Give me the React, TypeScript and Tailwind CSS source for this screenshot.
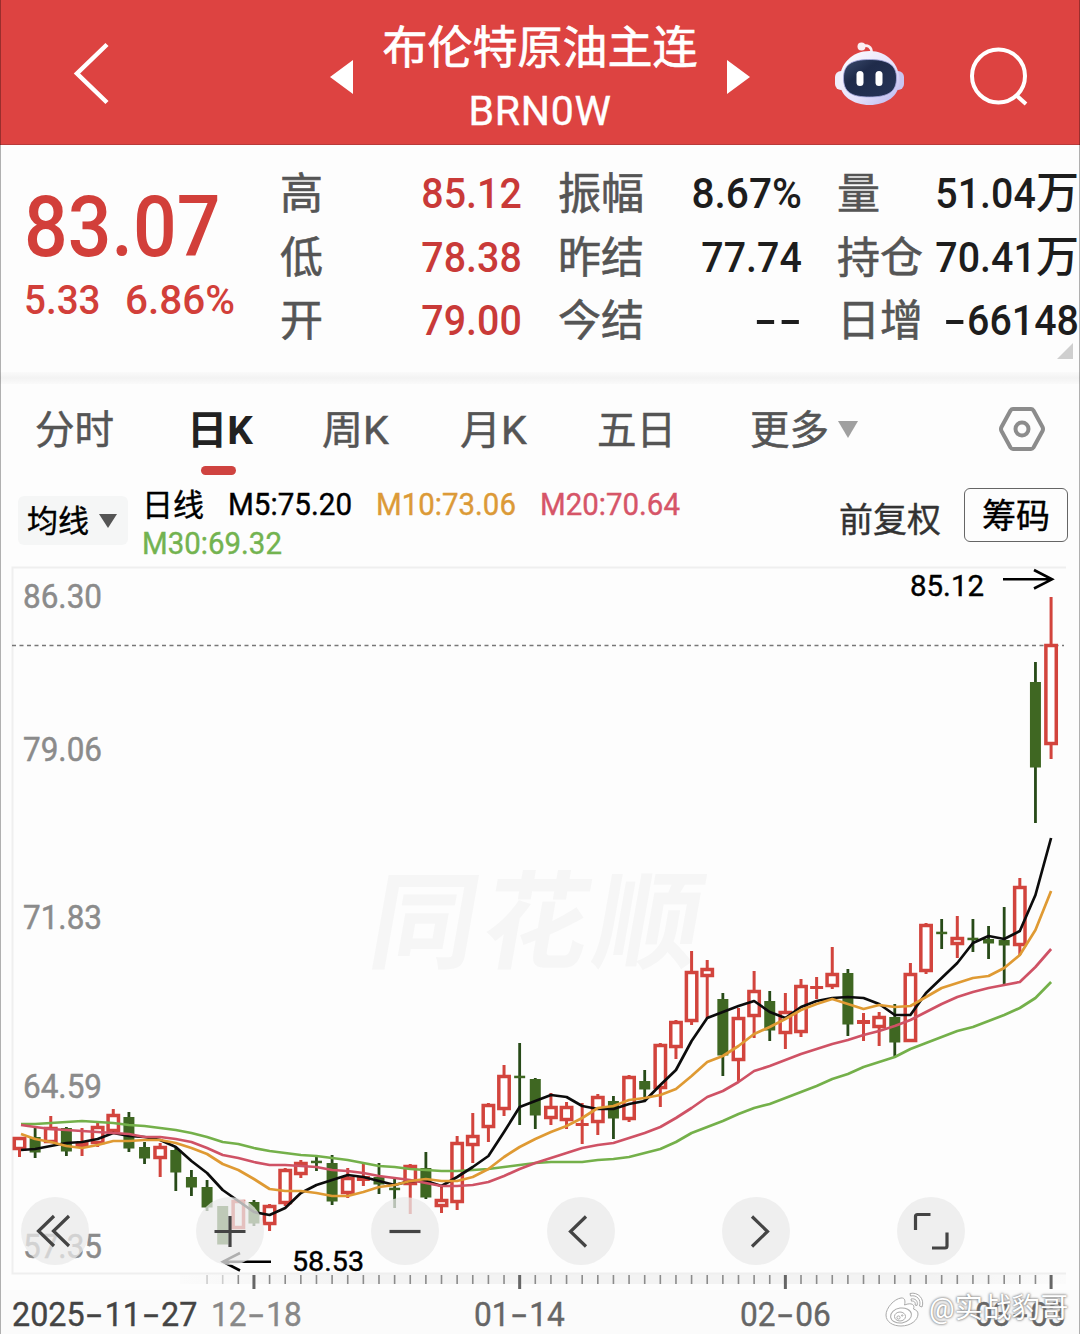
import { Fragment } from "react";

const STEP = 15.63;
const FIRST_X = 19.5;

// [wick top, body top, body bottom, wick bottom, is up]
const candles = [
  [1137, 1137, 1150, 1157, 1], [1128, 1137, 1152, 1158, 0], [1116, 1127, 1143, 1143, 1], [1127, 1128, 1151, 1156, 0],
  [1128, 1142, 1147, 1156, 1], [1122, 1126, 1144, 1147, 1], [1109, 1114, 1132, 1133, 1], [1112, 1117, 1148, 1152, 0],
  [1142, 1147, 1158, 1164, 0], [1143, 1146, 1159, 1177, 1], [1148, 1150, 1172, 1191, 0], [1170, 1177, 1187, 1196, 0],
  [1180, 1187, 1207, 1211, 0], [1206, 1206, 1244, 1244, 0], [1200, 1200, 1229, 1229, 1], [1200, 1202, 1223, 1226, 0],
  [1204, 1205, 1225, 1231, 1], [1168, 1169, 1204, 1206, 1], [1160, 1162, 1175, 1178, 1], [1157, 1161, 1163, 1171, 0],
  [1155, 1163, 1201, 1205, 0], [1168, 1177, 1194, 1198, 1], [1164, 1176, 1181, 1186, 1], [1163, 1177, 1184, 1194, 0],
  [1179, 1188, 1190, 1208, 0], [1164, 1165, 1185, 1214, 1], [1152, 1168, 1197, 1199, 0], [1187, 1199, 1207, 1213, 1],
  [1136, 1142, 1203, 1210, 1], [1113, 1135, 1146, 1163, 1], [1103, 1104, 1128, 1142, 1], [1065, 1075, 1110, 1116, 1],
  [1043, 1076, 1078, 1125, 0], [1078, 1079, 1115, 1129, 0], [1093, 1106, 1119, 1125, 1], [1102, 1106, 1121, 1129, 1],
  [1103, 1123, 1126, 1144, 1], [1094, 1096, 1123, 1135, 1], [1096, 1101, 1118, 1139, 0], [1075, 1076, 1120, 1122, 1],
  [1070, 1081, 1089, 1100, 0], [1043, 1044, 1089, 1107, 1], [1020, 1021, 1048, 1059, 1], [951, 971, 1022, 1025, 1],
  [960, 968, 977, 1018, 1], [993, 999, 1055, 1076, 0], [1008, 1017, 1061, 1081, 1], [971, 990, 1017, 1038, 1],
  [991, 1001, 1030, 1041, 0], [993, 1011, 1034, 1049, 1], [979, 985, 1033, 1037, 1], [977, 986, 989, 999, 1],
  [947, 973, 987, 989, 1], [969, 973, 1024, 1036, 0], [1013, 1020, 1024, 1041, 1], [1012, 1016, 1028, 1046, 1],
  [1004, 1017, 1042, 1057, 0], [963, 973, 1042, 1042, 1], [923, 924, 972, 974, 1], [919, 932, 934, 949, 0],
  [916, 937, 945, 958, 1], [919, 938, 940, 952, 0], [926, 939, 943, 959, 0], [907, 940, 945, 985, 0],
  [878, 886, 946, 955, 1], [662, 682, 767, 823, 0], [597, 644, 745, 759, 1],
];

const averages = [
  {
    name: "M30",
    color: "#74b04a",
    values: [1124, 1124, 1123, 1122, 1121, 1122, 1123, 1125, 1126, 1128, 1130, 1133, 1137, 1142, 1144, 1148, 1151, 1153, 1155, 1156, 1158, 1160, 1163, 1166, 1167, 1169, 1170, 1171, 1171, 1170, 1169, 1167, 1165, 1163, 1162, 1162, 1162, 1160, 1159, 1157, 1153, 1149, 1142, 1133, 1127, 1121, 1114, 1108, 1104, 1098, 1092, 1086, 1079, 1074, 1067, 1062, 1057, 1049, 1043, 1037, 1031, 1027, 1021, 1015, 1008, 998, 982],
  },
  {
    name: "M5",
    color: "#0c0c0c",
    values: [1150, 1149, 1146, 1143, 1142, 1139, 1133, 1136, 1137, 1140, 1147, 1161, 1173, 1190, 1201, 1212, 1215, 1208, 1193, 1185, 1180, 1175, 1177, 1181, 1185, 1181, 1181, 1186, 1177, 1167, 1156, 1132, 1107, 1101, 1095, 1097, 1106, 1109, 1109, 1104, 1101, 1085, 1070, 1041, 1018, 1012, 1006, 1001, 1012, 1018, 1007, 1001, 998, 997, 998, 1004, 1015, 1015, 993, 978, 963, 943, 936, 939, 931, 895, 838],
  },
  {
    name: "M20",
    color: "#cf5265",
    values: [1125, 1127, 1129, 1130, 1131, 1132, 1133, 1134, 1137, 1137, 1139, 1142, 1148, 1155, 1158, 1162, 1165, 1165, 1166, 1167, 1170, 1171, 1173, 1176, 1178, 1180, 1183, 1186, 1186, 1185, 1182, 1176, 1169, 1163, 1158, 1153, 1148, 1145, 1143, 1138, 1133, 1127, 1118, 1108, 1097, 1091, 1082, 1071, 1066, 1060, 1054, 1049, 1044, 1040, 1035, 1031, 1026, 1020, 1012, 1004, 997, 992, 988, 985, 982, 967, 949],
  },
  {
    name: "M10",
    color: "#df9a33",
    values: [1134, 1139, 1142, 1146, 1148, 1145, 1141, 1141, 1140, 1140, 1143, 1148, 1154, 1164, 1170, 1179, 1189, 1191, 1191, 1193, 1196, 1196, 1192, 1187, 1185, 1181, 1179, 1181, 1181, 1177, 1169, 1157, 1147, 1139, 1132, 1126, 1118, 1108, 1106, 1100, 1098, 1095, 1089, 1076, 1062, 1056, 1046, 1034, 1027, 1019, 1010, 1004, 999, 1004, 1009, 1005, 1007, 1006, 997, 988, 983, 978, 976, 968, 955, 930, 891],
  },
];

const priceLabels = [
  { text: "86.30", y: 608 },
  { text: "79.06", y: 761 },
  { text: "71.83", y: 929 },
  { text: "64.59", y: 1098 },
  { text: "57.35", y: 1258 },
];

const statColumns = [
  {
    className: "ml-[280px] w-[242px] text-[#c93a38]",
    rows: [["高", "85.12", ""], ["低", "78.38", ""], ["开", "79.00", ""]],
  },
  {
    className: "ml-9 w-[244px] text-[#1d1d1d]",
    rows: [["振幅", "8.67%", ""], ["昨结", "77.74", ""], ["今结", "--", ""]],
  },
  {
    className: "ml-[35px] w-[242px] text-[#1d1d1d]",
    rows: [["量", "51.04", "万"], ["持仓", "70.41", "万"], ["日增", "-66148", ""]],
  },
];

// Narrow figures with dashes as wide as a digit
const Num = ({ text, className = "scale-x-[0.93]" }: { text: string; className?: string }) => (
  <span className={`inline-block whitespace-nowrap ${className}`}>
    {text.split("").map((char, index) =>
      char === "-" ? (
        <span key={index} className="inline-block w-[0.62em] text-center scale-x-[1.7]">
          -
        </span>
      ) : (
        <Fragment key={index}>{char}</Fragment>
      )
    )}
  </span>
);

const Robot = () => (
  <svg viewBox="0 0 72 66" className="w-[72px] h-[66px]">
    <defs>
      <linearGradient id="shell" x1="0" y1="0" x2="1" y2="1">
        <stop offset="0" stopColor="#fff" />
        <stop offset="0.6" stopColor="#e4e0fa" />
        <stop offset="1" stopColor="#b6b4ee" />
      </linearGradient>
      <linearGradient id="visor" x1="0" y1="0" x2="1" y2="1">
        <stop offset="0" stopColor="#3b4c6e" />
        <stop offset="0.35" stopColor="#1f2b4a" />
        <stop offset="1" stopColor="#263458" />
      </linearGradient>
    </defs>
    <path d="M27 6.500C34 4 38 7 37.500 13" fill="none" stroke="#fbeef2" strokeWidth="2.600" />
    <circle cx="27.500" cy="6.500" r="4" fill="#fbeef2" />
    <rect x="1" y="31" width="12" height="19" rx="6" fill="#efeefb" />
    <rect x="58" y="31" width="12" height="19" rx="6" fill="#c9c5f0" />
    <path d="M35.500 11C53 11 65.500 24 65.500 41C65.500 56 52 65 35.500 65C19 65 5.500 56 5.500 41C5.500 24 18 11 35.500 11Z" fill="url(#shell)" />
    <path d="M35.500 19.500C54 19.500 62.500 25 62.500 38C62.500 52 54 57 35.500 57C17 57 9.500 52 9.500 38C9.500 25 17 19.500 35.500 19.500Z" fill="url(#visor)" stroke="#a7aae0" strokeWidth="0.800" />
    <rect x="22.500" y="31" width="7" height="15" rx="3.500" fill="#fff" />
    <rect x="41.500" y="31" width="7" height="15" rx="3.500" fill="#fff" />
  </svg>
);

const Header = () => (
  <header className="flex h-[145px] bg-[#dd4341] text-white border-b border-[#b93a3a]">
    <svg viewBox="0 0 40 66" className="ml-[72px] mt-10 w-10 h-[66px]" fill="none" stroke="#fff" strokeWidth="4.500">
      <path d="M35 4.500L5 33.500L35 62.500" />
    </svg>
    <svg viewBox="0 0 24 34" className="ml-[218px] mt-[60px] w-6 h-[34px]" fill="#fff">
      <path d="M0 17L23 0V34Z" />
    </svg>
    <div className="ml-[26px] mt-[17px] w-[320px] flex flex-col items-center">
      <h1 className="text-[45px] leading-[64px] whitespace-nowrap [-webkit-text-stroke:0.7px]">布伦特原油主连</h1>
      <span className="text-[41px] leading-[60px] tracking-[0.7px] [-webkit-text-stroke:0.4px]">BRN0W</span>
    </div>
    <svg viewBox="0 0 24 34" className="ml-[27px] mt-[60px] w-6 h-[34px]" fill="#fff">
      <path d="M23 17L0 0V34Z" />
    </svg>
    <div className="ml-[83px] mt-10">
      <Robot />
    </div>
    <svg viewBox="0 0 60 60" className="ml-[63px] mt-[46px] w-[60px] h-[60px]" fill="none" stroke="#fff" strokeWidth="4">
      <circle cx="29.500" cy="30" r="26.500" />
      <path d="M47 49L57 58" />
    </svg>
  </header>
);

const Quote = () => (
  <section className="relative flex h-[227px] pt-[17px]">
    <div className="absolute left-6 top-[35px] text-[#d23f3a]">
      <div className="h-[94px]">
        <Num text="83.07" className="origin-left scale-x-[0.895] text-[86px] leading-[94px] font-medium" />
      </div>
      <div className="flex text-[41.500px] leading-[52px] font-medium">
        <Num text="5.33" className="w-[101px] origin-left scale-x-[0.93]" />
        <Num text="6.86%" className="origin-left scale-x-[0.975]" />
      </div>
    </div>
    {statColumns.map((column, index) => (
      <div key={index} className={`shrink-0 flex flex-col text-[43px] leading-[63.500px] font-medium ${column.className}`}>
        {column.rows.map(([label, value, unit]) => (
          <div key={label} className="flex h-[63.500px] justify-between whitespace-nowrap">
            <span className="mt-px font-normal text-[#555] [-webkit-text-stroke:0.6px]">{label}</span>
            <span className="flex">
              <Num
                text={value}
                className={value.includes("%") ? "origin-right scale-x-[0.945]" : "origin-right scale-x-[0.915]"}
              />
              {unit}
            </span>
          </div>
        ))}
      </div>
    ))}
    <svg viewBox="0 0 16 16" className="absolute right-[7px] top-[198px] w-4 h-4" fill="#cfcfcf">
      <path d="M16 0V16H0Z" />
    </svg>
  </section>
);

const Tabs = () => (
  <nav className="flex h-[101px] pt-[17px] text-[39.500px] leading-[60px] text-[#555] [-webkit-text-stroke:0.5px]">
    <span className="ml-[35px] w-[152px]">分时</span>
    <span className="w-[135px] flex flex-col font-bold text-[#222] [-webkit-text-stroke:0px]">
      <span className="origin-left scale-x-[1.02]">日K</span>
      <span className="ml-[14px] mt-[5px] w-[35px] h-[9px] rounded-full bg-[#cf4340]"></span>
    </span>
    <span className="w-[138px] origin-left scale-x-[1.04]">周K</span>
    <span className="w-[137px] origin-left scale-x-[1.04]">月K</span>
    <span className="w-[153px]">五日</span>
    <span>更多</span>
    <svg viewBox="0 0 20 17" className="ml-[9px] mt-5 w-5 h-[17px]" fill="#a0a0a0">
      <path d="M0 0H20L10 17Z" />
    </svg>
    <svg viewBox="0 0 48 46" className="ml-[140px] mt-[5px] w-12 h-[46px]" fill="none" stroke="#8c8c8c" strokeWidth="4">
      <path d="M15 3H33Q34.500 3 35.500 4.500L44.500 21Q45.500 23 44.500 25L35.500 41.500Q34.500 43 33 43H15Q13.500 43 12.500 41.500L3.500 25Q2.500 23 3.500 21L12.500 4.500Q13.500 3 15 3Z" />
      <circle cx="24" cy="23" r="6.500" />
    </svg>
  </nav>
);

const Indicators = () => (
  <section className="flex h-[75px] text-black">
    <div className="ml-[18px] mt-[11px] w-[110px] h-[49px] rounded-md bg-[#f5f6f6] flex items-center pl-[9px] text-[31px]">
      <span className="mt-1 [-webkit-text-stroke:0.4px]">均线</span>
      <svg viewBox="0 0 18 14" className="ml-[10px] w-[18px] h-[14px]" fill="#555">
        <path d="M0 0H18L9 14Z" />
      </svg>
    </div>
    <div className="ml-[14px] w-[601px] text-[30.500px] leading-[40px] [-webkit-text-stroke:0.4px]">
      <div className="flex h-[39px]">
        <span className="mt-px w-[86px] text-[31px]">日线</span>
        <Num text="M5:75.20" className="w-[148px] origin-left scale-x-[0.97]" />
        <Num text="M10:73.06" className="w-[164px] origin-left scale-x-[0.965] text-[#dc9a37]" />
        <Num text="M20:70.64" className="origin-left scale-x-[0.965] text-[#d65568]" />
      </div>
      <Num text="M30:69.32" className="origin-left scale-x-[0.965] text-[#73b350]" />
    </div>
    <span className="ml-[96px] mt-[9px] text-[34px] leading-[52px] text-[#333] [-webkit-text-stroke:0.4px]">前复权</span>
    <button className="ml-[23px] mt-[3px] w-[104px] h-[54px] rounded-md border border-[#666] pt-[2px] text-[34px] leading-[50px] [-webkit-text-stroke:0.4px]">
      筹码
    </button>
  </section>
);

const Candle = ({ index }: { index: number }) => {
  const [high, top, bottom, low, up] = candles[index];
  const x = FIRST_X + index * STEP;
  if (!up) {
    const thin = bottom - top < 3;
    return (
      <g fill="#3f6722">
        <rect x={x - 1.4} y={high} width="2.800" height={low - high} fill="#274a18" />
        <rect x={x - 5.5} y={thin ? top - 0.3 : top} width="11" height={bottom - top + 0.5} />
      </g>
    );
  }
  const hollow = bottom - top > 6;
  return (
    <g fill="#d2443d">
      <rect x={x - 1.5} y={high} width="3" height={top - high} />
      <rect x={x - 1.5} y={bottom} width="3" height={low - bottom} />
      {hollow ? (
        <rect x={x - 5.2} y={top + 1.5} width="10.400" height={bottom - top - 3} fill="#fff" stroke="#d2443d" strokeWidth="3.500" />
      ) : (
        <rect x={x - 6.5} y={top} width="13" height={bottom - top} />
      )}
    </g>
  );
};

const Chart = () => (
  <svg viewBox="0 560 1080 730" className="block w-[1080px] h-[730px]">
    <defs>
      <linearGradient id="ruler" x1="0" y1="0" x2="1" y2="0">
        <stop offset="0" stopColor="#fbfbfb" />
        <stop offset="0.2" stopColor="#f3f3f3" />
        <stop offset="0.85" stopColor="#f3f3f3" />
        <stop offset="1" stopColor="#fbfbfb" />
      </linearGradient>
    </defs>
    <rect x="180" y="1274" width="886" height="10" fill="url(#ruler)" />
    <path d="M1066 567.500H12.500V1273.500H1066" fill="none" stroke="#efefef" strokeWidth="2" />
    <text
      x="372"
      y="960"
      transform="translate(163 0) skewX(-10)"
      textLength="330"
      fontSize="106"
      fontWeight="700"
      fill="#f6f6f6"
    >
      同花顺
    </text>
    <g fontSize="34" fill="#8b8b8b" stroke="#8b8b8b" strokeWidth="0.500">
      {priceLabels.map((label) => (
        <text key={label.text} x="23" y={label.y} textLength="79" lengthAdjust="spacingAndGlyphs">
          {label.text}
        </text>
      ))}
    </g>
    <path d="M12 645.500H1064" stroke="#777" strokeWidth="1.300" strokeDasharray="4 3.500" />

    {candles.map((_, index) => (
      <Candle key={index} index={index} />
    ))}
    {averages.map((line) => (
      <polyline
        key={line.name}
        points={line.values.map((y, index) => `${index === 0 ? 21 : FIRST_X + index * STEP},${y}`).join(" ")}
        fill="none"
        stroke={line.color}
        strokeWidth="2.700"
        strokeLinejoin="round"
      />
    ))}

    <g fill="none" stroke="#000" strokeWidth="2.600">
      <path d="M1003 579.300H1051M1034 570L1052 579.300L1034 588.500" />
      <path d="M271 1261.700H224M240 1253L223 1261.700L240 1270.500" />
    </g>
    <g stroke="#000" strokeWidth="0.400">
      <text x="910" y="596" fontSize="29" textLength="74" lengthAdjust="spacingAndGlyphs">85.12</text>
      <text x="292" y="1270.500" fontSize="28" textLength="72" lengthAdjust="spacingAndGlyphs">58.53</text>
    </g>

    {/* Day ruler */}
    {candles.map((_, index) => {
      if (index < 12) return null;
      const major = (index - 15) % 17 === 0;
      return (
        <rect
          key={index}
          x={FIRST_X + index * STEP - (major ? 1.5 : 0.8)}
          y="1275"
          width={major ? 3 : 1.6}
          height={major ? 14 : 9}
          fill={major ? "#666" : "#8c8c8c"}
          opacity={index < 14 ? 0.4 : 1}
        />
      );
    })}
  </svg>
);

const controls = [
  "M33 19L17.500 34L33 49M48 19L32.500 34L48 49",
  "M34 19V50M18.500 34.500H49.500",
  "M18.500 34.500H49.500",
  "M39 19.500L23.500 34.500L39 49.500",
  "M30 19.500L45.500 34.500L30 49.500",
  "M18.500 33V19.500Q18.500 17.500 20.500 17.500H33.500M50 35.500V49Q50 51 48 51H35",
];

const Controls = () => (
  <div className="absolute left-[21px] top-[1197px] flex gap-[107.200px]">
    {controls.map((d) => (
      <button key={d} className="w-[68px] h-[68px] rounded-full bg-[#e9eaea]/75">
        <svg viewBox="0 0 68 68" className="w-[68px] h-[68px]" fill="none" stroke="#444" strokeWidth="3.200">
          <path d={d} />
        </svg>
      </button>
    ))}
  </div>
);

const Dates = () => (
  <footer className="flex h-11 pt-[3px] bg-[#fbfbfb] text-[34px] leading-[42px] text-[#666] [-webkit-text-stroke:0.4px]">
    <Num text="2025-11-27" className="ml-3 w-[199px] origin-left scale-x-[0.95] text-[#444]" />
    <Num text="12-18" className="w-[263px] origin-left scale-x-[0.93] text-[#888]" />
    <Num text="01-14" className="w-[266px] origin-left scale-x-[0.93]" />
    <Num text="02-06" className="w-[235px] origin-left scale-x-[0.93]" />
    <Num text="03-03" className="origin-left scale-x-[0.93]" />
  </footer>
);

const AuthorMark = () => (
  <div className="absolute left-[885px] top-[1289px] flex items-center text-white [text-shadow:0_0_3px_#777,0_0_2px_#888]">
    <svg viewBox="0 0 40 38" className="w-10 h-[38px]" fill="#fff" stroke="#aaa" strokeWidth="1">
      <path d="M16 8C9 9 1 18 1 25C1 32 8 36 16 36C26 36 33 30 33 24C33 21 31 20 28.500 19C30 15 27 12 19.500 15C20.500 11 20 7.500 16 8Z" />
      <ellipse cx="16" cy="25.500" rx="10.500" ry="7.500" transform="rotate(-8 16 25.500)" />
      <ellipse cx="15" cy="26.500" rx="5.500" ry="4.500" />
      <circle cx="13.500" cy="27.500" r="1.600" />
      <circle cx="17.200" cy="25.500" r="0.700" />
      <path d="M25 3.500C33 1.500 40 9 37 17L34.500 16C36.500 10 32 4.500 25.500 6Z" />
      <path d="M26 9C30 8 33.500 11 32 15.500L30 15C31 12.500 29 10.500 26.500 11.200Z" />
    </svg>
    <span className="ml-1 text-[28.500px] leading-[40px] whitespace-nowrap">@实战豹哥</span>
  </div>
);

const App = () => {
  return (
    <main className="relative w-[1080px] h-[1334px] overflow-hidden bg-[#fdfdfd] font-[Roboto,'Noto_Sans_CJK_SC',sans-serif]">
      <Header />
      <Quote />
      <div className="h-3 bg-gradient-to-b from-[#fafafa] via-[#f3f3f3] to-[#fafafa]"></div>
      <Tabs />
      <Indicators />
      <Chart />
      <Dates />
      <Controls />
      <AuthorMark />
      {/* Hairline screen edges */}
      <div className="absolute inset-0 border-x border-black/30 pointer-events-none"></div>
    </main>
  );
};

export default App;
